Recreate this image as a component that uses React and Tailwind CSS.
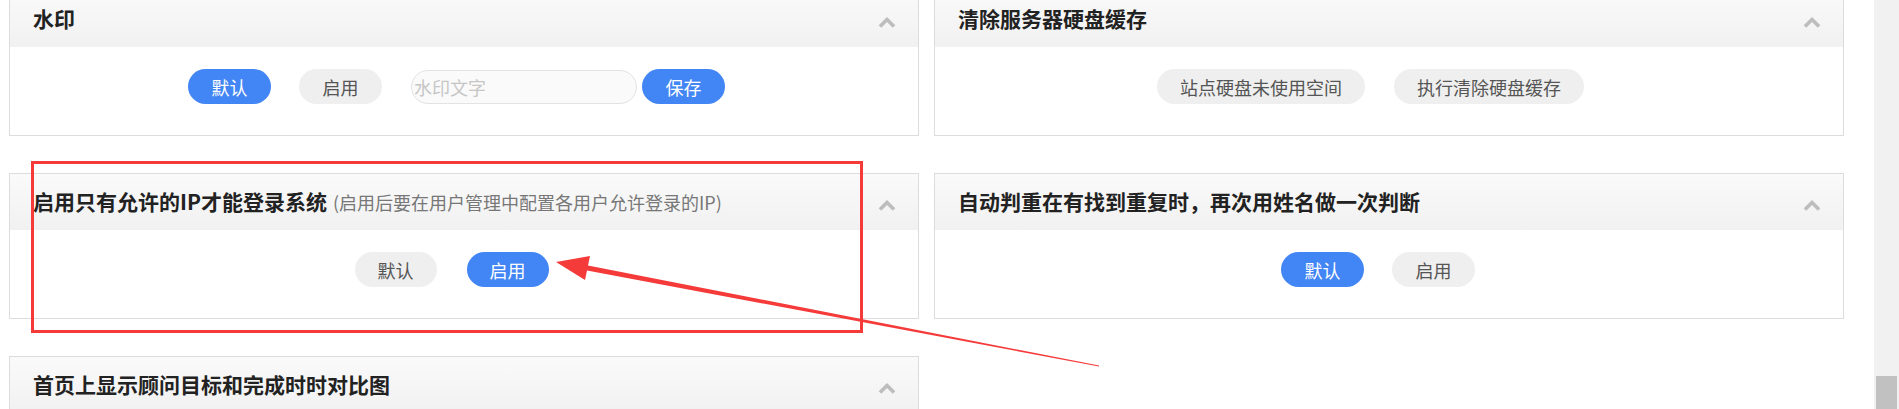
import React from 'react';

const font = { fontFamily: '"Microsoft YaHei", "Noto Sans CJK SC", "Noto Sans", sans-serif' };

function Chevron() {
  return (
    <svg width="20" height="13" viewBox="0 0 20 13" className="mt-[6px]">
      <path d="M3 10.5 L10 3.5 L17 10.5" fill="none" stroke="#bdbdbd" strokeWidth="3.6" />
    </svg>
  );
}

function Btn({ children, active, w }) {
  return (
    <button
      className={
        'h-[35px] rounded-full text-[18px] leading-none ' +
        (active ? 'bg-[#4285f4] text-white' : 'bg-[#efefef] text-[#555]') +
        ' ' + w
      }
    >
      {children}
    </button>
  );
}

function Panel({ title, sub, children, bodyClass }) {
  return (
    <div className="border border-[#dcdcdc] bg-white">
      <div className="h-[56px] flex items-center justify-between pl-[23px] pr-[21px] bg-gradient-to-b from-[#fafafa] to-[#f1f1f1]">
        <div className="flex items-baseline">
          <span className="text-[21px] font-bold text-[#222]">{title}</span>
          {sub && <span className="ml-[6px] text-[18px] text-[#777]">{sub}</span>}
        </div>
        <Chevron />
      </div>
      {children && (
        <div className={'flex justify-center items-center pt-[22px] pb-[31px] ' + bodyClass}>{children}</div>
      )}
    </div>
  );
}

export default function App() {
  return (
    <div className="relative w-[1899px] h-[409px] overflow-hidden bg-white flex" style={font}>
      <div className="flex-1 -mt-[10px] pl-[9px] pr-[30px]">
        <div className="grid grid-cols-2 gap-x-[15px] gap-y-[37px]">
          <Panel title="水印" bodyClass="pr-[15px]">
            <Btn active w="w-[83px]">默认</Btn>
            <div className="w-[28px]" />
            <Btn w="w-[83px]">启用</Btn>
            <div className="w-[29px]" />
            <input
              placeholder="水印文字"
              className="w-[226px] h-[34px] rounded-full border border-[#e3e3e3] bg-[#fafafa] pl-[2px] text-[18px] placeholder:text-[#c6c6c6] outline-none"
            />
            <div className="w-[5px]" />
            <Btn active w="w-[83px]">保存</Btn>
          </Panel>
          <Panel title="清除服务器硬盘缓存" bodyClass="pr-[37px]">
            <Btn w="w-[208px]">站点硬盘未使用空间</Btn>
            <div className="w-[29px]" />
            <Btn w="w-[190px]">执行清除硬盘缓存</Btn>
          </Panel>
          <Panel title="启用只有允许的IP才能登录系统" sub="(启用后要在用户管理中配置各用户允许登录的IP)" bodyClass="pr-[25px]">
            <Btn w="w-[82px]">默认</Btn>
            <div className="w-[30px]" />
            <Btn active w="w-[82px]">启用</Btn>
          </Panel>
          <Panel title="自动判重在有找到重复时，再次用姓名做一次判断" bodyClass="pr-[22px]">
            <Btn active w="w-[83px]">默认</Btn>
            <div className="w-[28px]" />
            <Btn w="w-[83px]">启用</Btn>
          </Panel>
          <Panel title="首页上显示顾问目标和完成时时对比图" bodyClass="">
            <div className="h-[60px]" />
          </Panel>
        </div>
      </div>
      <div className="w-[25px] bg-[#f1f1f1] flex flex-col justify-end items-center">
        <div className="w-[21px] h-[33px] bg-[#c1c1c1]" />
      </div>

      {/* annotation */}
      <div className="absolute left-[31px] top-[161px] w-[832px] h-[172px] border-[3px] border-[#f53a3a] pointer-events-none" />
      <svg className="absolute left-0 top-0 pointer-events-none" width="1899" height="409">
        <polygon
          points="556,262 585,280 587,270.5 1099,366.5 1099,365.5 588,265.5 590,256"
          fill="#f53a3a"
        />
      </svg>
    </div>
  );
}
